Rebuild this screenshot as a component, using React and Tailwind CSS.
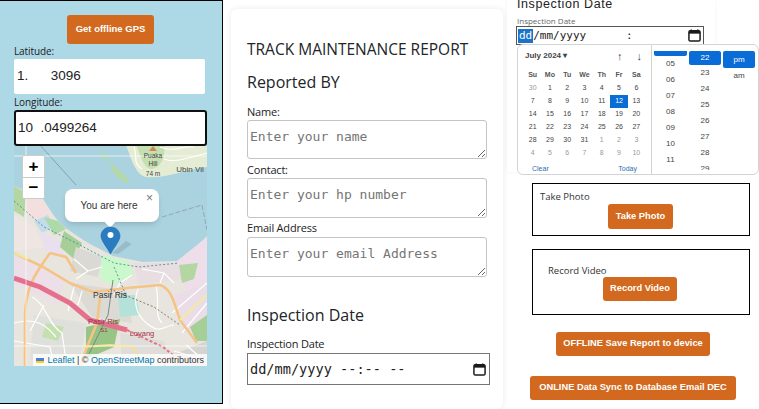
import React from "react";

const days = [
  ["30","1","2","3","4","5","6"],
  ["7","8","9","10","11","12","13"],
  ["14","15","16","17","18","19","20"],
  ["21","22","23","24","25","26","27"],
  ["28","29","30","31","1","2","3"],
  ["4","5","6","7","8","9","10"],
];
const sans = "font-['Open_Sans','Noto_Sans',sans-serif]";
const btn = "bg-[#d2691e] text-white text-[9.3px] font-bold rounded-[3px] flex items-center justify-center whitespace-nowrap font-['Liberation_Sans',sans-serif]";
const area = "block w-[240px] border border-[#c4c4c4] rounded-[3px] px-[2px] py-[6px] text-[13px] leading-[20px] font-['DejaVu_Sans_Mono',monospace] placeholder:text-[#757575]";
const lab = "block text-[11px] leading-[15px] tracking-[-0.2px]";

function MapArt() {
  return (
    <svg className="absolute inset-0 w-full h-full" viewBox="0 0 193 220" preserveAspectRatio="none">
      <rect width="193" height="220" fill="#aad3df" />
      <g transform="translate(0 9)">
        {/* Ubin and small islands */}
        <path d="M112 -10 C118 6 122 20 132 22 C150 24 175 14 193 12 L193 -10 Z" fill="#e4ecd4" />
        <path d="M122 -10 C128 4 130 14 138 14 C146 12 152 4 150 -10 Z" fill="#c4dfb0" />
        <path d="M96 8 C102 12 112 20 116 28 C108 28 98 20 96 8 Z" fill="#b6d8a6" />
        <path d="M84 -6 L96 6 L92 6 Z" fill="#b6d8a6" />
        <path d="M135 -4 L139 -9 L143 -4 Z" fill="#d08850" />
        {/* mainland */}
        <path d="M0 31 L29 44 C38 58 44 68 53 74 C65 82 76 90 86 94 L99 101 L129 107 L163 106 L173 101 L193 81 L193 211 L0 211 Z" fill="#e8e5df" />
        <path d="M0 31 L12 38 L10 62 L0 56 Z" fill="#b3d6a2" />
        <path d="M12 40 L29 46 L38 62 L24 68 L12 58 Z" fill="#f3dfde" />
        <path d="M20 66 L34 60 L40 72 L28 78 Z" fill="#c4dcea" />
        <path d="M30 62 L44 66 L52 74 L40 80 Z" fill="#aedaaa" />
        <path d="M0 60 L20 72 L30 92 L0 96 Z" fill="#efe6e3" />
        <path d="M26 76 L46 86 L50 102 L32 96 Z" fill="#eadfee" />
        <path d="M50 76 L68 88 L60 104 L46 92 Z" fill="#a6cf98" />
        <path d="M62 92 L88 102 L84 122 L56 116 Z" fill="#dbd9d4" />
        <path d="M88 100 L113 106 L120 118 L100 130 L86 124 Z" fill="#c9f8cb" />
        <path d="M120 108 L165 108 L170 124 L124 130 Z" fill="#e8dee1" />
        <path d="M163 106 L193 82 L193 135 L172 138 Z" fill="#eedeea" />
        <path d="M165 110 L184 108 L180 124 L168 128 Z" fill="#b3d6a2" />
        <path d="M0 100 L30 112 L52 124 L42 150 L12 136 L0 130 Z" fill="#ecdfe8" />
        <path d="M56 128 L112 136 L118 168 L78 162 Z" fill="#dcdad5" />
        <path d="M104 140 L122 140 L126 160 L106 162 Z" fill="#b4e2d8" />
        <path d="M125 134 L160 134 L166 170 L135 176 Z" fill="#e8e5e0" />
        <path d="M20 160 L72 168 L66 205 L16 205 Z" fill="#dfdfdb" />
        <path d="M32 168 L50 172 L44 186 L28 182 Z" fill="#c4e0b0" />
        <path d="M72 172 L106 164 L100 192 L72 204 Z" fill="#98c486" />
        <path d="M106 178 L150 186 L156 205 L108 205 Z" fill="#dfddd9" />
        <path d="M160 140 L193 128 L193 168 L170 178 Z" fill="#ebdde8" />
        <path d="M176 172 L193 160 L193 186 L182 186 Z" fill="#a6cf98" />
        <path d="M158 200 L193 186 L193 211 L160 211 Z" fill="#d6d4d0" />
        {/* minor roads */}
        <g fill="none" stroke="#fff" strokeWidth="1.2">
          <path d="M18 142 C32 148 34 170 48 178 L52 205" />
          <path d="M0 168 C22 162 32 170 42 182" />
          <path d="M124 134 C118 150 124 164 138 172 C146 178 152 170 160 170" />
          <path d="M142 130 C146 150 140 160 148 168" />
          <path d="M158 158 L193 128 M168 178 L193 148" />
          <path d="M160 196 L193 206 M172 190 L186 202" />
          <path d="M60 104 L74 116 L62 124 M74 116 L88 112" />
          <path d="M0 186 L36 192 L40 210" />
          <path d="M100 140 L106 128 L118 120" />
          <path d="M60 132 L54 156 M68 136 L64 150 M30 150 L16 176" />
          <path d="M128 114 L150 118 L160 128 M150 118 L146 128" />
          <path d="M120 -8 C124 2 118 8 128 14 M146 -8 C160 -2 170 -10 180 -8" />
          <path d="M150 4 C160 8 170 4 193 -2" />
        </g>
        {/* secondary roads */}
        <g fill="none" stroke="#f5c485" strokeWidth="2.6">
          <path d="M36 98 C22 118 12 130 11 160 L11 211" />
          <path d="M0 98 L29 112 L56 128 L79 137 L113 133 L146 130 C158 134 160 148 166 165 L183 188" />
          <path d="M86 142 L83 168 L73 192 L66 211" />
          <path d="M36 98 L52 102 L62 118" />
        </g>
        <path d="M69 192 L96 190 L119 192 L126 205" fill="none" stroke="#f7e08c" strokeWidth="2" />
        <path d="M0 98 L14 104 M166 165 L193 140" fill="none" stroke="#f4eb9a" strokeWidth="1.8" />
        <path d="M96 134 L140 152 L166 170" fill="none" stroke="#8a7a5a" strokeWidth="1" strokeDasharray="2 2" />
        <path d="M0 123 L26 132 L56 148 L76 165 L113 175" fill="none" stroke="#e5708c" strokeWidth="5" />
        <path d="M113 175 L149 192 L159 200 L150 211" fill="none" stroke="#e5708c" strokeWidth="2" strokeDasharray="3 2" />
        <path d="M99 125 L94 160 L72 205" fill="none" stroke="#7b8a80" strokeWidth="1" />
        {/* boundaries and paths */}
        <path d="M26 -10 L62 30" fill="none" stroke="#7d93a0" strokeWidth="0.8" />
        <path d="M148 62 L188 50 L193 75" fill="none" stroke="#8a9aa6" strokeWidth="0.8" strokeDasharray="5 2" />
        <path d="M0 46 L30 72 L62 88 L100 108 L125 112 L165 108" fill="none" stroke="#2e8797" strokeWidth="0.8" strokeDasharray="2 2" />
        <path d="M100 112 L112 140" fill="none" stroke="#2e8797" strokeWidth="0.8" strokeDasharray="2 2" />
        <path d="M0 1 H193 M12 -9 V211 M0 191 H193" stroke="#ffffff" strokeWidth="0.9" opacity="0.75" fill="none" />
        {/* map labels */}
        <g fontFamily="Liberation Sans, sans-serif" textAnchor="middle">
          <text x="139" y="3" fontSize="6.5" fill="#444">Puaka</text>
          <text x="139" y="11" fontSize="6.5" fill="#444">Hill</text>
          <text x="139" y="21" fontSize="6.5" fill="#444">74 m</text>
          <text x="176" y="17" fontSize="8" fill="#444">Ubin Vil</text>
          <text x="96" y="143" fontSize="8.5" fill="#333">Pasir Ris</text>
          <text x="89" y="169" fontSize="7.5" fill="#a0304a">Pasir Ris</text>
          <text x="90" y="177" fontSize="6" fill="#a0304a">S1</text>
          <text x="128" y="181" fontSize="7.5" fill="#a0304a">Loyang</text>
        </g>
      </g>
    </svg>
  );
}

function CalendarIcon() {
  return (
    <svg width="13" height="13" viewBox="0 0 14 14" className="shrink-0">
      <path d="M3.5 0.5v2M10.5 0.5v2" stroke="#1a1a1a" strokeWidth="1.6" />
      <rect x="1" y="2" width="12" height="11" rx="1.5" fill="none" stroke="#1a1a1a" strokeWidth="1.6" />
      <rect x="1" y="2" width="12" height="3" fill="#1a1a1a" />
    </svg>
  );
}

function Picker() {
  return (
    <div className="absolute left-[10px] top-[44px] w-[242px] h-[131px] bg-white rounded-[6px] border border-[#d4d4d4] flex font-['Liberation_Sans',sans-serif] text-[#444]">
      <div className="w-[134px] h-full border-r border-[#d4d4d4] flex flex-col pl-[6px] pr-[6px] pt-[3px] text-[7px] font-medium">
        <div className="flex items-center h-[16px] text-[8px] font-bold text-[#444]">
          <span className="ml-[1px]">July 2024 ▾</span>
          <span className="ml-auto mr-[14px] text-[11px] font-normal">↑</span>
          <span className="mr-[3px] text-[11px] font-normal">↓</span>
        </div>
        <div className="grid grid-cols-7 mt-[5px]">
          {["Su","Mo","Tu","We","Th","Fr","Sa"].map((d) => (
            <span key={d} className="h-[13px] text-center text-[7px] font-bold text-[#555] flex items-center justify-center">{d}</span>
          ))}
          {days.flat().map((d, i) => (
            <span
              key={i}
              className={
                i === 12
                  ? "h-[13px] bg-[#0a6cd6] text-white flex items-center justify-center"
                  : (i === 0 || i > 31)
                  ? "h-[13px] text-[#999] flex items-center justify-center"
                  : "h-[13px] flex items-center justify-center"
              }
            >
              {d}
            </span>
          ))}
        </div>
        <div className="flex justify-between text-[#2a6fb0] text-[7px] font-normal mt-[4px] px-[8px]">
          <span>Clear</span>
          <span>Today</span>
        </div>
      </div>
      <div className="flex-1 flex pl-[2px] pt-[6px] gap-[2px] text-[8px] font-medium overflow-hidden">
        <div className="w-[33px] flex flex-col items-center h-[119px] overflow-hidden">
          <div className="h-[5px] w-full bg-[#0a6cd6] rounded-b-[2px] shrink-0" />
          {["05","06","07","08","09","10","11"].map((v) => (
            <span key={v} className="h-[16px] leading-[16px] shrink-0">{v}</span>
          ))}
        </div>
        <div className="w-[32px] flex flex-col items-center h-[119px] overflow-hidden">
          <div className="h-[14px] w-full bg-[#0a6cd6] rounded-[2px] text-white text-center shrink-0 leading-[14px]">22</div>
          {["23","24","25","26","27","28","29"].map((v) => (
            <span key={v} className="h-[16px] leading-[16px] shrink-0">{v}</span>
          ))}
        </div>
        <div className="w-[32px] flex flex-col items-center">
          <div className="h-[17px] w-full bg-[#0a6cd6] rounded-[2px] text-white text-center leading-[17px]">pm</div>
          <span className="h-[16px] leading-[16px]">am</span>
        </div>
      </div>
    </div>
  );
}

export default function App() {
  return (
    <div className={`w-[759px] h-[409px] overflow-hidden bg-white flex items-start ${sans}`}>
      {/* GPS panel */}
      <div className="w-[223px] h-[404px] shrink-0 bg-[#add8e6] border-t border-r border-b border-black box-border flex flex-col pl-[14px]">
        <button className={`${btn} self-start ml-[53px] w-[87px] h-[29px] mt-[14px] text-[9.5px]`}>Get offline GPS</button>
        <label className="text-[10px] leading-[14px] text-[#222] tracking-[-0.1px]">Latitude:</label>
        <div className="mt-[1px] w-[191px] h-[35px] bg-white rounded-[2px] flex items-center pl-[3px] text-[13.5px] text-[#222] font-['Liberation_Sans',sans-serif]">1.&nbsp;&nbsp;&nbsp;&nbsp;&nbsp;&nbsp;3096</div>
        <label className="text-[10px] leading-[14px] text-[#222] mt-[1px] tracking-[-0.1px]">Longitude:</label>
        <div className="mt-[1px] w-[193px] h-[36px] bg-white rounded-[3px] border-2 border-[#101010] flex items-center pl-[2px] text-[13.5px] text-[#222] font-['Liberation_Sans',sans-serif]">10&nbsp;&nbsp;.0499264</div>
        <div className="relative w-[193px] h-[220px] overflow-hidden font-['Liberation_Sans',sans-serif]">
          <MapArt />
          <div className="absolute left-[8px] top-[9px] w-[23px] h-[44px] bg-white border border-[#ccc] rounded-[2px] flex flex-col">
            <span className="h-[22px] flex items-center justify-center text-[17px] font-bold leading-none text-black border-b border-[#ccc]">+</span>
            <span className="h-[21px] flex items-center justify-center text-[17px] font-bold leading-none text-black">−</span>
          </div>
          <div className="absolute left-[51px] top-[43px] w-[94px] h-[33px] bg-white rounded-[8px] shadow-md flex items-center justify-center text-[10px] text-[#333] pr-[6px] pb-[1px]">
            You are here
            <span className="absolute right-[6px] top-[2px] text-[12px] leading-[14px] text-[#777]">×</span>
          </div>
          <svg className="absolute left-[84px] top-[75px]" width="46" height="36" viewBox="0 0 46 36">
            <path d="M6 0 L18 0 L12 7 Z" fill="#ffffff" />
            <path d="M14 32 L28 20 L34 23 L20 33 Z" fill="#000" opacity="0.1" />
            <path d="M12.5 6C7 6 3 10 3 15C3 20 9.5 27 12.5 33C15.5 27 22 20 22 15C22 10 18 6 12.5 6Z" fill="#2a7cc0" stroke="#2368a5" strokeWidth="0.6" />
            <circle cx="12.5" cy="14" r="3" fill="#fff" />
          </svg>
          <div className="absolute right-0 bottom-0 h-[12px] pl-[3px] pr-[3px] bg-white/80 text-[9px] leading-[12px] text-[#333] flex items-center whitespace-nowrap">
            <span className="inline-flex flex-col w-[8px] h-[5px] mr-[3px]">
              <span className="h-[3px] bg-[#4c7be1]" />
              <span className="h-[2px] bg-[#ffd500]" />
            </span>
            <span className="text-[#0078a8]">Leaflet</span>&nbsp;| ©&nbsp;<span className="text-[#0078a8]">OpenStreetMap</span>&nbsp;contributors
          </div>
        </div>
      </div>

      {/* Report card */}
      <div className="w-[272px] h-[400px] shrink-0 ml-[8px] mt-[9px] bg-white rounded-[6px] shadow-[0_0_6px_rgba(0,0,0,0.09)] pl-[16px] pt-[31px] text-[#222]">
        <h1 className="text-[15.5px] leading-[18px] font-normal text-[#212529] whitespace-nowrap">TRACK MAINTENANCE REPORT</h1>
        <h2 className="text-[16px] leading-[20px] font-normal mt-[14px] text-[#212529]">Reported BY</h2>
        <label className={`${lab} mt-[12px]`}>Name:</label>
        <textarea readOnly placeholder="Enter your name" className={`${area} h-[39px] mt-[1px]`} />
        <label className={`${lab} mt-[3px]`}>Contact:</label>
        <textarea readOnly placeholder="Enter your hp number" className={`${area} h-[40px] mt-[1px]`} />
        <label className={`${lab} mt-[2px]`}>Email Address</label>
        <textarea readOnly placeholder="Enter your email Address" className={`${area} h-[40px] mt-[2px]`} />
        <h2 className="text-[16px] leading-[20px] font-normal mt-[28px] text-[#212529]">Inspection Date</h2>
        <label className={`${lab} mt-[11px]`}>Inspection Date</label>
        <div className="w-[243px] h-[32px] mt-[2px] border border-[#767676] flex items-center pl-[2px] pr-[3px] text-[13.6px] font-['DejaVu_Sans_Mono',monospace] text-[#222]">
          <span className="whitespace-pre">dd/mm/yyyy --:-- --</span>
          <span className="ml-auto"><CalendarIcon /></span>
        </div>
      </div>

      {/* Right column */}
      <div className="relative flex-1 h-[409px] ml-[4px] min-w-0 flex flex-col items-start">
        <div className="absolute left-0 top-0 w-[208px] h-[172px] bg-white shadow-[0_0_4px_rgba(0,0,0,0.05)]" />
        <div className="relative pl-[9px] text-[#222]">
          <h2 className="text-[12.5px] leading-[12px] tracking-[0.6px] font-normal -mt-[2px] ml-[1px] font-['Liberation_Sans',sans-serif]">Inspection Date</h2>
          <label className="block text-[8px] leading-[10px] text-[#666] mt-[6px] ml-[1px]">Inspection Date</label>
          <div className="w-[188px] h-[19px] border border-[#555] flex items-center pr-[2px] text-[11px] leading-[14px] font-['DejaVu_Sans_Mono',monospace] bg-white">
            <span className="bg-[#1a73c9] text-white h-[14px] px-[1px] leading-[14px] ml-[1px]">dd</span>
            <span className="whitespace-pre">/mm/yyyy      :</span>
            <span className="ml-auto"><CalendarIcon /></span>
          </div>
        </div>
        <Picker />
        <div className="relative w-[218px] h-[53px] ml-[25px] mt-[138px] border border-black flex flex-col items-start">
          <span className="ml-[7px] mt-[6px] text-[9.5px] leading-[14px] text-[#333]">Take Photo</span>
          <button className={`${btn} ml-[75px] w-[65px] h-[25px]`}>Take Photo</button>
        </div>
        <div className="relative w-[218px] h-[66px] ml-[25px] mt-[13px] border border-black flex flex-col items-start">
          <span className="ml-[15px] mt-[14px] text-[9.5px] leading-[14px] text-[#333]">Record Video</span>
          <button className={`${btn} ml-[70px] -mt-[1px] w-[74px] h-[24px]`}>Record Video</button>
        </div>
        <button className={`${btn} relative ml-[49px] mt-[17px] w-[154px] h-[24px]`}>OFFLINE Save Report to device</button>
        <button className={`${btn} relative ml-[23px] mt-[20px] w-[206px] h-[24px]`}>ONLINE Data Sync to Database Email DEC</button>
      </div>
    </div>
  );
}
